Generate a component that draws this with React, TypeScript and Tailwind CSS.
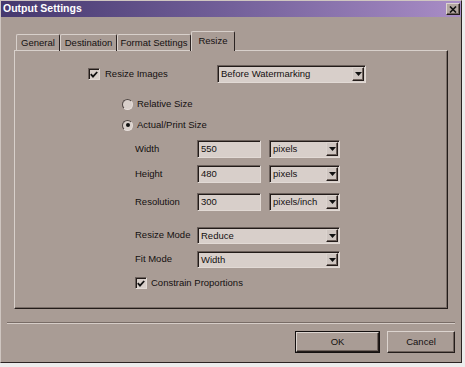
import React from "react";

const sunken =
  "border border-t-[#6b605b] border-l-[#6b605b] border-b-[#e2dad5] border-r-[#e2dad5] shadow-[inset_1px_1px_0_#221b19] bg-[#d8cfca]";
const raised =
  "border border-t-[#dcd4cf] border-l-[#dcd4cf] border-b-[#231c1a] border-r-[#231c1a] shadow-[inset_-1px_-1px_0_#6e625c]";

const Arrow: React.FC = () => (
  <svg width="7" height="4" viewBox="0 0 7 4">
    <path d="M0 0 H7 L3.5 4 Z" fill="#111" />
  </svg>
);

const Select: React.FC<{ value: string; className?: string }> = ({
  value,
  className,
}) => (
  <div className={`${sunken} flex items-center ${className ?? ""}`}>
    <span className="flex-1 truncate pl-[3px] leading-none">{value}</span>
    <span
      className={`${raised} mr-px flex h-[calc(100%-2px)] w-[12px] items-center justify-center bg-[#cfc6c1]`}
    >
      <Arrow />
    </span>
  </div>
);

const Input: React.FC<{ value: string }> = ({ value }) => (
  <div className={`${sunken} flex h-[18px] w-[64px] items-center pl-[3px] leading-none`}>
    {value}
  </div>
);

const Checkbox: React.FC = () => (
  <div className={`${sunken} flex h-[12px] w-[12px] items-center justify-center`}>
    <svg width="8" height="7" viewBox="0 0 8 7">
      <path d="M0.8 3.2 L3 5.6 L7.2 1" stroke="#111" strokeWidth="1.8" fill="none" />
    </svg>
  </div>
);

const Radio: React.FC<{ checked?: boolean }> = ({ checked }) => (
  <div className="flex h-[11px] w-[11px] items-center justify-center rounded-full border border-t-[#4e4542] border-l-[#4e4542] border-b-[#e6deda] border-r-[#e6deda] bg-[#d8cfca]">
    {checked && <div className="h-[4px] w-[4px] rounded-full bg-[#111]" />}
  </div>
);

const tabs = [
  { label: "General", w: "w-[44px]" },
  { label: "Destination", w: "w-[57px]" },
  { label: "Format Settings", w: "w-[74px]" },
];

const App: React.FC = () => {
  return (
    <div className="h-[367px] w-[465px] bg-[#ececec] [font-family:'Liberation_Sans',Arial,sans-serif] text-[9.5px] text-[#141010]">
      <div className="flex h-[363px] w-[462px] flex-col border border-t-[#cfc6c1] border-l-[#cfc6c1] border-b-[#2b2322] border-r-[#2b2322] bg-[#a99c95]">
        {/* barra de titulo */}
        <div className="flex h-[16px] items-center justify-between bg-gradient-to-r from-[#45386e] via-[#73609a] to-[#a98dc6] pl-[2px] pr-[1px]">
          <span className="text-[10.5px] font-bold text-white">Output Settings</span>
          <button
            className={`${raised} flex h-[12px] w-[14px] items-center justify-center bg-[#b3a7a1]`}
          >
            <svg width="8" height="7" viewBox="0 0 8 7">
              <path d="M1 0.5 L7 6.5 M7 0.5 L1 6.5" stroke="#111" strokeWidth="1.6" />
            </svg>
          </button>
        </div>

        {/* pestañas */}
        <div className="relative z-10 mt-[14px] -mb-px ml-[13px] flex h-[20px] items-end">
          <div className="flex h-[17px] items-stretch pl-[2px]">
            {tabs.map((t) => (
              <div
                key={t.label}
                className={`${t.w} flex items-center justify-center rounded-t-[2px] border-t border-l border-r border-t-[#d8d0cb] border-l-[#d8d0cb] border-r-[#2b2322] leading-none`}
              >
                {t.label}
              </div>
            ))}
          </div>
          <div className="flex h-[20px] w-[44px] items-start justify-center rounded-t-[2px] border-t border-l border-r border-t-[#d8d0cb] border-l-[#d8d0cb] border-r-[#2b2322] bg-[#a99c95] pt-[4px] leading-none">
            Resize
          </div>
        </div>

        {/* panel */}
        <div className="ml-[13px] flex h-[259px] w-[434px] flex-col border border-t-[#d8d0cb] border-l-[#d8d0cb] border-b-[#231c1a] border-r-[#231c1a] shadow-[inset_-1px_-1px_0_#7a6e68]">
          <div className="mt-[14px] flex h-[18px] items-center">
            <div className="ml-[73px] flex w-[129px] items-center gap-[5px]">
              <Checkbox />
              <span>Resize Images</span>
            </div>
            <Select value="Before Watermarking" className="h-[18px] w-[149px]" />
          </div>

          <div className="mt-[14px] ml-[107px] flex h-[14px] items-center gap-[4px]">
            <Radio />
            <span>Relative Size</span>
          </div>
          <div className="mt-[7px] ml-[107px] flex h-[14px] items-center gap-[4px]">
            <Radio checked />
            <span>Actual/Print Size</span>
          </div>

          {[
            { label: "Width", value: "550", unit: "pixels", mt: "mt-[8px]" },
            { label: "Height", value: "480", unit: "pixels", mt: "mt-[7px]" },
            { label: "Resolution", value: "300", unit: "pixels/inch", mt: "mt-[10px]" },
          ].map((r) => (
            <div key={r.label} className={`${r.mt} ml-[120px] flex h-[18px] items-center`}>
              <span className="w-[62px]">{r.label}</span>
              <Input value={r.value} />
              <Select value={r.unit} className="ml-[8px] h-[18px] w-[71px]" />
            </div>
          ))}

          <div className="mt-[16px] ml-[120px] flex h-[17px] items-center">
            <span className="w-[62px]">Resize Mode</span>
            <Select value="Reduce" className="h-[17px] w-[143px]" />
          </div>
          <div className="mt-[7px] ml-[120px] flex h-[17px] items-center">
            <span className="w-[62px]">Fit Mode</span>
            <Select value="Width" className="h-[17px] w-[143px]" />
          </div>

          <div className="mt-[9px] ml-[120px] flex h-[12px] items-center gap-[4px]">
            <Checkbox />
            <span>Constrain Proportions</span>
          </div>
        </div>

        {/* separador */}
        <div className="mt-[13px] ml-[6px] w-[448px] border-t border-b border-t-[#786c66] border-b-[#d6cdc8]" />

        {/* botones */}
        <div className="mt-[7px] mr-[6px] flex justify-end gap-[7px]">
          <button className="h-[22px] w-[85px] border border-[#141010] p-0">
            <div className={`${raised} flex h-full w-full items-center justify-center leading-none`}>
              OK
            </div>
          </button>
          <button
            className={`${raised} flex h-[22px] w-[68px] items-center justify-center leading-none`}
          >
            Cancel
          </button>
        </div>
      </div>
    </div>
  );
};

export default App;
